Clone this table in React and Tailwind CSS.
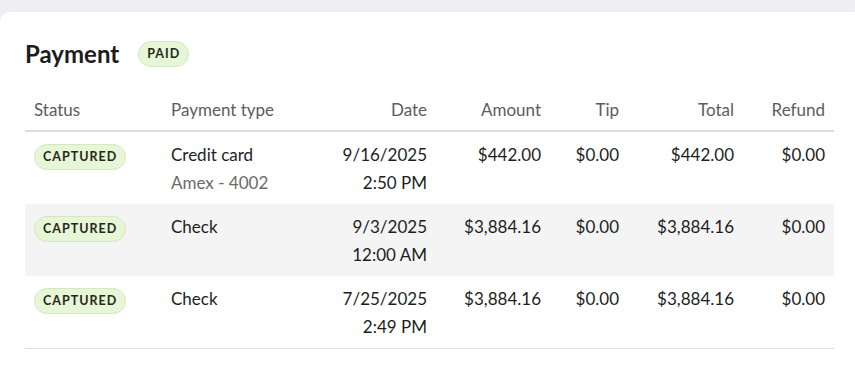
import React from "react";

const rows = [
  { type: "Credit card", sub: "Amex - 4002", date: "9/16/2025", time: "2:50 PM", amount: "$442.00", tip: "$0.00", total: "$442.00", refund: "$0.00", shaded: false },
  { type: "Check", date: "9/3/2025", time: "12:00 AM", amount: "$3,884.16", tip: "$0.00", total: "$3,884.16", refund: "$0.00", shaded: true },
  { type: "Check", date: "7/25/2025", time: "2:49 PM", amount: "$3,884.16", tip: "$0.00", total: "$3,884.16", refund: "$0.00", shaded: false },
];

function Badge({ children, className = "" }) {
  return (
    <span className={`inline-flex items-center h-[26px] rounded-full bg-[#e6f6d7] border border-[#d2e9bf] text-[12.5px] font-bold tracking-[1px] text-[#1f2a1a] leading-none ${className}`}>
      {children}
    </span>
  );
}

const cols = "grid grid-cols-[137px_138px_136px_114px_78px_115px_91px]";

export default function App() {
  return (
    <div className="w-[855px] h-[376px] overflow-hidden bg-[#efeff1] pt-[12px]" style={{ fontFamily: "Lato, 'Noto Sans', sans-serif" }}>
      <div className="w-[863px] h-[400px] bg-white rounded-[10px] pl-[25px] pr-[29px] pt-[29px]">
        <div className="flex items-center h-[26px]">
          <h1 className="text-[24px] font-bold text-[#1c1c1c] leading-none">Payment</h1>
          <Badge className="ml-[19px] px-[8px]">PAID</Badge>
        </div>
        <div className="w-[809px] mt-[23px] text-[17px]">
          <div className={`${cols} h-[42px] items-center border-b-2 border-[#dcdcdc] text-[#5c5c5c]`}>
            <div className="px-[9px] text-left">Status</div>
            <div className="px-[9px] text-left">Payment type</div>
            <div className="px-[9px] text-right">Date</div>
            <div className="px-[9px] text-right">Amount</div>
            <div className="px-[9px] text-right">Tip</div>
            <div className="px-[9px] text-right">Total</div>
            <div className="px-[9px] text-right">Refund</div>
          </div>
          <div className="text-[#1e1e1e] leading-[28px] border-b border-[#dedede]">
            {rows.map((r, i) => (
              <div key={i} className={`${cols} h-[72px] items-start ${r.shaded ? "bg-[#f4f4f4]" : "bg-white"}`}>
                <div className="px-[9px] pt-[12px] flex">
                  <Badge className="px-[8px]">CAPTURED</Badge>
                </div>
                <div className="px-[9px] pt-[9px]">
                  <div>{r.type}</div>
                  {r.sub && <div className="text-[#6a6a6a]">{r.sub}</div>}
                </div>
                <div className="px-[9px] pt-[9px] text-right">
                  <div>{r.date}</div>
                  <div>{r.time}</div>
                </div>
                <div className="px-[9px] pt-[9px] text-right">{r.amount}</div>
                <div className="px-[9px] pt-[9px] text-right">{r.tip}</div>
                <div className="px-[9px] pt-[9px] text-right">{r.total}</div>
                <div className="px-[9px] pt-[9px] text-right">{r.refund}</div>
              </div>
            ))}
          </div>
        </div>
      </div>
    </div>
  );
}
